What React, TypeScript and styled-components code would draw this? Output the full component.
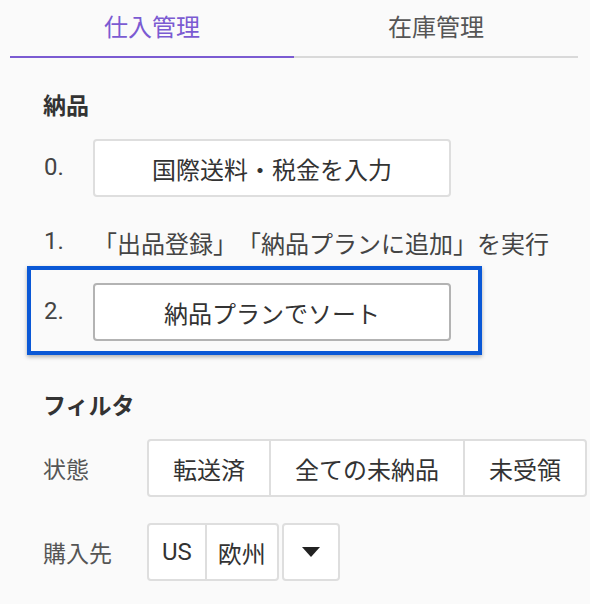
import React from "react";
import styled, { createGlobalStyle } from "styled-components";

const GlobalStyle = createGlobalStyle`
  html, body {
    margin: 0;
    padding: 0;
    background: #fafafa;
  }
  body {
    font-family: Roboto, "Noto Sans CJK JP", "Noto Sans", sans-serif;
    color: #333;
    text-spacing-trim: space-all;
  }
  * { box-sizing: border-box; }
`;

const Page = styled.div`
  width: 590px;
  height: 604px;
  padding: 0 0 0 10px;
  background: #fafafa;
  overflow: hidden;
`;

const Tabs = styled.div`
  display: flex;
  width: 568px;
`;

const Tab = styled.div<{ $active?: boolean }>`
  flex: 1;
  height: 58px;
  display: flex;
  align-items: center;
  justify-content: center;
  padding-bottom: 6px;
  font-size: 24px;
  color: ${(p) => (p.$active ? "#7b5bd2" : "#555")};
  border-bottom: 2px solid ${(p) => (p.$active ? "#7b5bd2" : "#d9d9d9")};
`;

const Content = styled.div`
  padding-left: 33px;
  display: flex;
  flex-direction: column;
`;

const Heading = styled.div<{ $mt: number }>`
  margin-top: ${(p) => p.$mt}px;
  height: 32px;
  line-height: 32px;
  font-size: 23px;
  font-weight: 700;
  color: #333;
`;

const StepRow = styled.div<{ $mt: number; $h: number }>`
  margin-top: ${(p) => p.$mt}px;
  height: ${(p) => p.$h}px;
  display: flex;
  align-items: center;
`;

const StepNum = styled.span`
  width: 50px;
  flex: none;
  font-size: 24px;
  color: #444;
  padding-left: 1px;
  margin-top: -2px;
`;

const StepText = styled.span`
  font-size: 24px;
  color: #444;
  white-space: nowrap;
  text-spacing-trim: space-all;
`;

const ActionButton = styled.button<{ $strong?: boolean }>`
  width: 358px;
  height: 58px;
  flex: none;
  background: #fff;
  border: 2px solid ${(p) => (p.$strong ? "#b3b3b3" : "#dedede")};
  border-radius: 4px;
  font-family: inherit;
  font-size: 24px;
  color: #333;
  padding: 0;
  display: flex;
  align-items: center;
  justify-content: center;
`;

const Highlight = styled.div`
  margin-top: 8px;
  margin-left: -16px;
  width: 455px;
  height: 89px;
  border: 4px solid #0a58d6;
  padding: 13px 27px 10px 12px;
  box-shadow: 0 2px 4px rgba(0, 0, 0, 0.3);
  display: flex;
  align-items: center;
`;

const FilterRow = styled.div<{ $mt: number }>`
  margin-top: ${(p) => p.$mt}px;
  display: flex;
  align-items: center;
`;

const FilterLabel = styled.span`
  width: 104px;
  flex: none;
  font-size: 23px;
  color: #555;
`;

const Group = styled.div`
  display: flex;
  flex: none;
  height: 58px;
  border: 2px solid #dedede;
  border-radius: 4px;
  background: #fff;
  overflow: hidden;
`;

const Segment = styled.div<{ $pad: number }>`
  display: flex;
  align-items: center;
  justify-content: center;
  padding: 0 ${(p) => p.$pad}px;
  font-size: 24px;
  color: #333;
  white-space: nowrap;
  & + & {
    border-left: 2px solid #dedede;
  }
`;

const DropButton = styled.div`
  margin-left: 3px;
  width: 58px;
  height: 58px;
  flex: none;
  border: 2px solid #dedede;
  border-radius: 4px;
  background: #fff;
  display: flex;
  align-items: center;
  justify-content: center;
`;

const Caret = () => (
  <svg width="18" height="10" viewBox="0 0 18 10">
    <path d="M0 0 H18 L9 10 Z" fill="#222" />
  </svg>
);

export default function App() {
  return (
    <Page>
      <GlobalStyle />
      <Tabs>
        <Tab $active>仕入管理</Tab>
        <Tab>在庫管理</Tab>
      </Tabs>
      <Content>
        <Heading $mt={33}>納品</Heading>
        <StepRow $mt={16} $h={58}>
          <StepNum>0.</StepNum>
          <ActionButton>国際送料・税金を入力</ActionButton>
        </StepRow>
        <StepRow $mt={29} $h={32}>
          <StepNum>1.</StepNum>
          <StepText>「出品登録」「納品プランに追加」を実行</StepText>
        </StepRow>
        <Highlight>
          <StepNum>2.</StepNum>
          <ActionButton $strong>納品プランでソート</ActionButton>
        </Highlight>
        <Heading $mt={36}>フィルタ</Heading>
        <FilterRow $mt={16}>
          <FilterLabel>状態</FilterLabel>
          <Group>
            <Segment $pad={24}>転送済</Segment>
            <Segment $pad={24}>全ての未納品</Segment>
            <Segment $pad={24}>未受領</Segment>
          </Group>
        </FilterRow>
        <FilterRow $mt={26}>
          <FilterLabel>購入先</FilterLabel>
          <Group>
            <Segment $pad={13}>US</Segment>
            <Segment $pad={11}>欧州</Segment>
          </Group>
          <DropButton>
            <Caret />
          </DropButton>
        </FilterRow>
      </Content>
    </Page>
  );
}
